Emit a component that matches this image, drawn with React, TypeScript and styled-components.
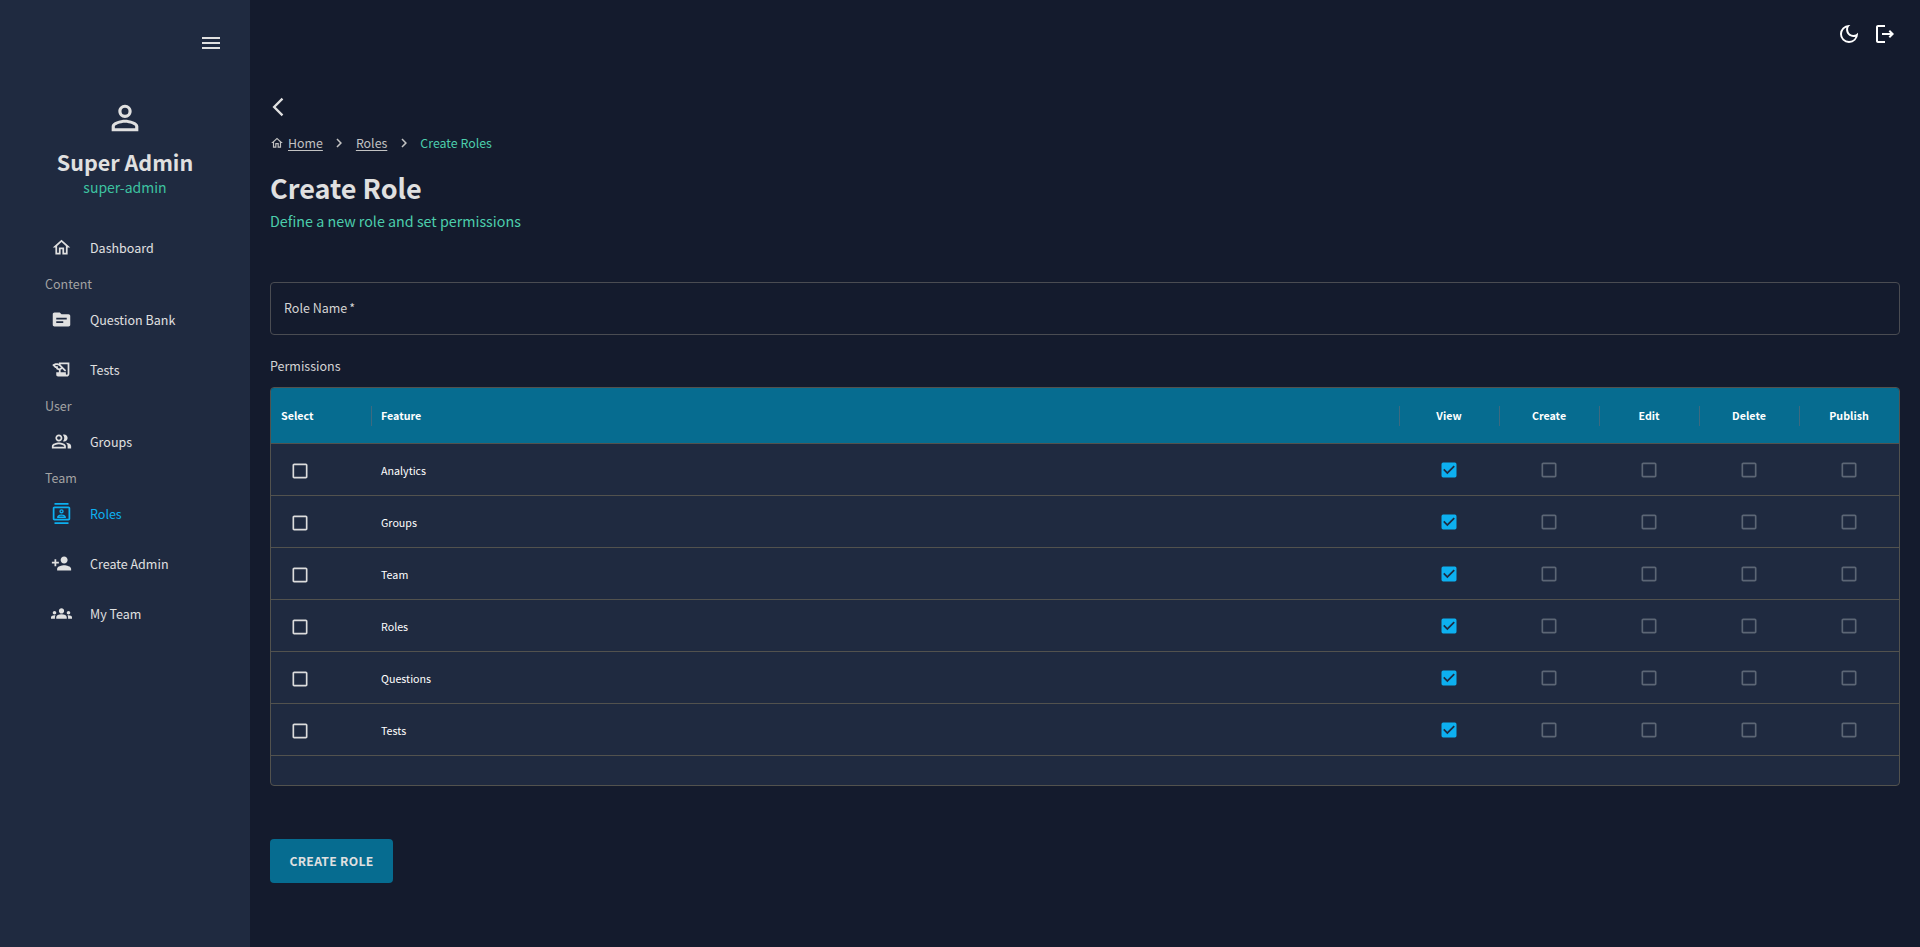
import React from "react";
import styled, { createGlobalStyle } from "styled-components";
import {
  MdMenu, MdPersonOutline, MdOutlineHome, MdTopic, MdOutlineHistoryEdu, MdOutlinePeopleAlt,
  MdOutlineContacts, MdPersonAdd, MdGroups, MdOutlineDarkMode, MdOutlineLogout,
  MdArrowBackIosNew, MdNavigateNext, MdCheckBox, MdCheckBoxOutlineBlank,
} from "react-icons/md";

const Global = createGlobalStyle`
  html, body { margin: 0; padding: 0; height: 100%; background: #141b2d; }
  body { font-family: "Noto Sans CJK SC", "Noto Sans", sans-serif; color: #e0e0e0; }
  #root { height: 100%; }
  * { box-sizing: border-box; }
`;

const Shell = styled.div`display: flex; height: 947px; overflow: hidden;`;
const Sidebar = styled.aside`width: 250px; flex: none; background: #1f2a40; display: flex; flex-direction: column;`;
const SideTop = styled.div`height: 86px; padding: 31px 27px 0 0; display: flex; justify-content: flex-end; font-size: 24px; color: #e0e0e0; svg { display: block; }`;
const Profile = styled.div`display: flex; flex-direction: column; align-items: center; height: 134px; padding-top: 12px;`;
const ProfileName = styled.div`font-size: 21.5px; font-weight: 700; line-height: 32px; margin-top: 8px;`;
const ProfileRole = styled.div`font-size: 14px; line-height: 20px; margin-top: -1px; color: #3dc2a0;`;
const Nav = styled.nav`display: flex; flex-direction: column; padding-top: 2px;`;
const SectionLabel = styled.div`height: 22px; line-height: 24px; padding-left: 45px; font-size: 12.5px; color: #a3a3a3;`;
const NavItem = styled.div<{ $active?: boolean }>`
  height: 50px; display: flex; align-items: center; padding-left: 51px; gap: 18px; font-size: 12.5px;
  color: ${(p) => (p.$active ? "#0db0f0" : "#e0e0e0")};
  svg { display: block; width: 21px; height: 21px; flex: none; }
`;

const Main = styled.main`flex: 1; min-width: 0; display: flex; flex-direction: column;`;
const TopBar = styled.div`height: 68px; display: flex; justify-content: flex-end; align-items: center; gap: 12px; padding-right: 23px; color: #fff; svg { display: block; width: 24px; height: 24px; }`;
const Content = styled.div`padding: 20px 20px 0; display: flex; flex-direction: column; align-items: stretch;`;
const Back = styled.div`height: 38px; display: flex; align-items: center; margin-left: -3px; font-size: 22px; svg { display: block; }`;
const Crumbs = styled.div`height: 34px; display: flex; align-items: center; font-size: 12.4px; color: #c2c2c2;`;
const CrumbHome = styled.span`display: flex; margin-right: 4px; svg { display: block; }`;
const CrumbLink = styled.span`text-decoration: underline; text-underline-offset: 2px;`;
const CrumbCurrent = styled.span`color: #4cceac;`;
const CrumbSep = styled.span`display: flex; width: 33px; justify-content: center; font-size: 18px;`;
const Title = styled.h1`margin: 7px 0 0; font-size: 27px; line-height: 42px; font-weight: 700;`;
const Subtitle = styled.div`font-size: 14.3px; line-height: 22px; color: #4cceac; margin-top: 1px;`;
const Field = styled.div`margin-top: 50px; height: 53px; border: 1px solid #4a4c52; border-radius: 4px; display: flex; align-items: center; padding: 0 0 2px 13px; font-size: 12.5px; color: #d4d4d4;`;
const Star = styled.span`margin-left: 2px;`;
const Sectionhead = styled.div`margin-top: 21px; height: 20px; line-height: 20px; font-size: 12.5px; color: #d4d4d4;`;
const Table = styled.div`margin-top: 11px; height: 399px; border: 1px solid #52524e; border-radius: 4px; overflow: hidden; background: #1f2a40; display: flex; flex-direction: column;`;
const gridCols = "100px 1fr repeat(5, 100px)";
const HeaderRow = styled.div`height: 56px; flex: none; display: grid; grid-template-columns: ${gridCols}; background: #066c90; border-bottom: 1px solid #52524e; align-items: center; font-size: 10.7px; font-weight: 700; color: #fff;`;
const HeaderCell = styled.div<{ $center?: boolean; $divider?: boolean }>`
  position: relative; padding: 0 10px; height: 100%; display: flex; align-items: center;
  justify-content: ${(p) => (p.$center ? "center" : "flex-start")};
  &::before { content: ""; display: ${(p) => (p.$divider ? "block" : "none")}; position: absolute; left: 0; top: 18px; height: 20px; width: 1px; background: #3d6a80; }
`;
const BodyRow = styled.div`height: 52px; flex: none; display: grid; grid-template-columns: ${gridCols}; border-bottom: 1px solid #52524e; align-items: center; font-size: 10.7px; color: #fff;`;
const SelectCell = styled.div`padding-left: 19px; padding-top: 3px; color: #dcdcdc; svg { display: block; width: 20px; height: 20px; }`;
const FeatureCell = styled.div`padding-left: 10px; padding-top: 1px;`;
const PermCell = styled.div<{ $on?: boolean }>`
  display: flex; justify-content: center; color: ${(p) => (p.$on ? "#0db0f0" : "#5c6675")};
  svg { display: block; width: 20px; height: 20px; }
`;
const CheckedBox = styled.span`
  position: relative; display: block; width: 20px; height: 20px;
  &::before { content: ""; position: absolute; left: 4px; top: 4px; width: 12px; height: 12px; background: #1f2a40; }
  svg { position: relative; }
`;
const Button = styled.button`
  margin-top: 53px; width: 123px; height: 44px; border: 0; border-radius: 4px; background: #066c90; color: #e0e0e0;
  font-family: inherit; font-size: 12.2px; font-weight: 700; letter-spacing: 0.3px; padding: 0;
`;

const features = ["Analytics", "Groups", "Team", "Roles", "Questions", "Tests"];
const perms = ["View", "Create", "Edit", "Delete", "Publish"];

export default function App() {
  return (
    <>
      <Global />
      <Shell>
        <Sidebar>
          <SideTop><MdMenu /></SideTop>
          <Profile>
            <MdPersonOutline size={40} />
            <ProfileName>Super Admin</ProfileName>
            <ProfileRole>super-admin</ProfileRole>
          </Profile>
          <Nav>
            <NavItem><MdOutlineHome />Dashboard</NavItem>
            <SectionLabel>Content</SectionLabel>
            <NavItem><MdTopic />Question Bank</NavItem>
            <NavItem><MdOutlineHistoryEdu />Tests</NavItem>
            <SectionLabel>User</SectionLabel>
            <NavItem><MdOutlinePeopleAlt />Groups</NavItem>
            <SectionLabel>Team</SectionLabel>
            <NavItem $active><MdOutlineContacts />Roles</NavItem>
            <NavItem><MdPersonAdd />Create Admin</NavItem>
            <NavItem><MdGroups />My Team</NavItem>
          </Nav>
        </Sidebar>
        <Main>
          <TopBar><MdOutlineDarkMode /><MdOutlineLogout /></TopBar>
          <Content>
            <Back><MdArrowBackIosNew /></Back>
            <Crumbs>
              <CrumbHome><MdOutlineHome size={14} /></CrumbHome>
              <CrumbLink>Home</CrumbLink>
              <CrumbSep><MdNavigateNext /></CrumbSep>
              <CrumbLink>Roles</CrumbLink>
              <CrumbSep><MdNavigateNext /></CrumbSep>
              <CrumbCurrent>Create Roles</CrumbCurrent>
            </Crumbs>
            <Title>Create Role</Title>
            <Subtitle>Define a new role and set permissions</Subtitle>
            <Field>Role Name<Star>*</Star></Field>
            <Sectionhead>Permissions</Sectionhead>
            <Table>
              <HeaderRow>
                <HeaderCell>Select</HeaderCell>
                <HeaderCell $divider>Feature</HeaderCell>
                {perms.map((p) => <HeaderCell key={p} $center $divider>{p}</HeaderCell>)}
              </HeaderRow>
              {features.map((f) => (
                <BodyRow key={f}>
                  <SelectCell><MdCheckBoxOutlineBlank /></SelectCell>
                  <FeatureCell>{f}</FeatureCell>
                  {perms.map((p, i) => (
                    <PermCell key={p} $on={i === 0}>
                      {i === 0 ? <CheckedBox><MdCheckBox /></CheckedBox> : <MdCheckBoxOutlineBlank />}
                    </PermCell>
                  ))}
                </BodyRow>
              ))}
            </Table>
            <div><Button>CREATE ROLE</Button></div>
          </Content>
        </Main>
      </Shell>
    </>
  );
}
